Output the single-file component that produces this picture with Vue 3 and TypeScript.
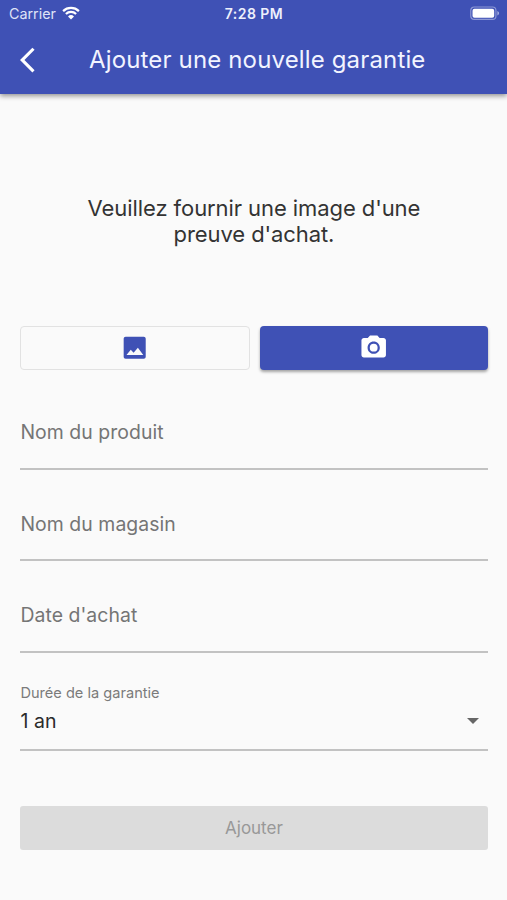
<script setup lang="ts">
import { ref } from 'vue'

interface Field {
  id: string
  label: string
}

const fields: Field[] = [
  { id: 'product', label: 'Nom du produit' },
  { id: 'shop', label: 'Nom du magasin' },
  { id: 'date', label: "Date d'achat" },
]
const duration = ref<string>('1 an')
</script>

<template>
  <div class="screen">
    <header class="header">
      <div class="status">
        <div class="carrier">
          <span class="carrier-name">Carrier</span>
          <svg class="wifi" viewBox="0 0 18 14" aria-hidden="true">
            <path d="M1.1 5.1a11.4 11.4 0 0 1 15.8 0" />
            <path d="M3.9 8a7.4 7.4 0 0 1 10.2 0" />
            <path class="wifi-dot" d="M9 13.4 6 10.5a4.3 4.3 0 0 1 6 0z" />
          </svg>
        </div>
        <span class="clock">7:28 PM</span>
        <svg class="battery" viewBox="0 0 31 15" aria-hidden="true">
          <rect class="battery-shell" x="0.8" y="0.8" width="26" height="12.8" rx="3.6" />
          <rect class="battery-fill" x="2.6" y="2.6" width="22.4" height="9.2" rx="2" />
          <path class="battery-tip" d="M28.3 5c2.3.9 2.3 3.6 0 4.5z" />
        </svg>
      </div>
      <div class="toolbar">
        <button class="back" type="button" aria-label="Retour">
          <svg viewBox="0 0 12 24"><path d="M11.67 3.87L9.9 2.1 0 12l9.9 9.9 1.77-1.77L3.54 12z" /></svg>
        </button>
        <h1 class="title">Ajouter une nouvelle garantie</h1>
      </div>
    </header>

    <main class="content">
      <p class="prompt">Veuillez fournir une image d'une<br />preuve d'achat.</p>

      <div class="sources">
        <button class="source outlined" type="button" aria-label="Galerie">
          <svg viewBox="0 0 24 24"><path d="M21 19.4V4.6c0-.9-.7-1.6-1.6-1.6H4.6C3.7 3 3 3.7 3 4.6v14.8c0 .9.7 1.6 1.6 1.6h14.8c.9 0 1.6-.7 1.6-1.6zM8.8 13.7l2.3 2.5 3.5-4.2 4.4 6H5.3l3.5-4.3z" /></svg>
        </button>
        <button class="source filled" type="button" aria-label="Appareil photo">
          <svg viewBox="0 0 24 24">
            <circle cx="12" cy="12" r="3.2" />
            <path d="M9 2L7.17 4H4c-1.1 0-2 .9-2 2v12c0 1.1.9 2 2 2h16c1.1 0 2-.9 2-2V6c0-1.1-.9-2-2-2h-3.17L15 2H9zm3 15c-2.76 0-5-2.24-5-5s2.24-5 5-5 5 2.24 5 5-2.24 5-5 5z" />
          </svg>
        </button>
      </div>

      <div class="fields">
        <div v-for="field in fields" :key="field.id" class="field">
          <span class="field-label">{{ field.label }}</span>
        </div>
      </div>

      <div class="select">
        <span class="select-label">Durée de la garantie</span>
        <div class="select-row">
          <span class="select-value">{{ duration }}</span>
          <svg class="caret" viewBox="0 0 12 6" aria-hidden="true"><path d="M0 0h12L6 6z" /></svg>
        </div>
      </div>

      <button class="submit" type="button" disabled>Ajouter</button>
    </main>
  </div>
</template>

<style>
body {
  margin: 0;
  background: #fafafa;
}
</style>

<style scoped>
.screen {
  height: 900px;
  overflow: hidden;
  background: #fafafa;
  font-family: Inter, "Liberation Sans", sans-serif;
}
button {
  font: inherit;
  margin: 0;
  padding: 0;
  border: 0;
  box-sizing: border-box;
}
.header {
  height: 94px;
  background: #3f51b5;
  color: #fff;
  box-shadow: 0 2px 5px rgba(0, 0, 0, 0.42);
}
.status {
  display: grid;
  grid-template-columns: 1fr auto 1fr;
  align-items: center;
  height: 26px;
  padding: 0 7px 0 9px;
  box-sizing: border-box;
}
.carrier {
  display: flex;
  align-items: center;
  gap: 6px;
  color: #dfe3f7;
}
.carrier-name {
  font-size: 14.3px;
  line-height: 18px;
  padding-top: 2px;
}
.wifi {
  width: 18px;
  height: 14px;
  fill: none;
  stroke: #fff;
  stroke-width: 2.2;
}
.wifi .wifi-dot {
  fill: #fff;
  stroke: none;
}
.clock {
  font-size: 14px;
  line-height: 18px;
  padding: 2px 1px 0 0;
  font-weight: 600;
  letter-spacing: 0.45px;
  color: #eef0fc;
}
.battery {
  justify-self: end;
  width: 30px;
  height: 15px;
}
.battery-shell {
  fill: none;
  stroke: #8d98d5;
  stroke-width: 1.2;
}
.battery-fill {
  fill: #fff;
}
.battery-tip {
  fill: #a5aedf;
}
.toolbar {
  display: flex;
  align-items: center;
  height: 67px;
  padding-left: 20px;
}
.back {
  display: flex;
  width: 69px;
  background: none;
}
.back svg {
  width: 15px;
  height: 30px;
  fill: #fff;
}
.title {
  margin: 0;
  padding-top: 1px;
  font-size: 24px;
  line-height: 30px;
  font-weight: 400;
  letter-spacing: 0.15px;
  white-space: nowrap;
  color: #f2f4ff;
}
.content {
  padding: 101px 19.5px 0 20.4px;
}
.prompt {
  margin: 0;
  text-align: center;
  font-size: 22px;
  line-height: 26px;
  letter-spacing: -0.08px;
  color: #333;
  white-space: nowrap;
}
.sources {
  display: flex;
  gap: 10px;
  margin-top: 79px;
}
.source {
  flex: 1;
  display: flex;
  align-items: center;
  justify-content: center;
  height: 44px;
  border-radius: 4px;
}
.source svg {
  width: 29.4px;
  height: 29.4px;
  margin-right: 1px;
}
.outlined {
  background: transparent;
  border: 1.5px solid #e2e2e2;
  fill: #3f51b5;
}
.filled {
  background: #3f51b5;
  fill: #fff;
  box-shadow: 0 2px 3px rgba(0, 0, 0, 0.35);
}
.field {
  height: 91.7px;
  padding-top: 41px;
  box-sizing: border-box;
  border-bottom: 2px solid #c2c2c2;
}
.fields {
  margin-top: 8px;
}
.field-label {
  display: block;
  font-size: 19.4px;
  line-height: 26px;
  letter-spacing: 0.07px;
  color: #757575;
}
.select {
  height: 97.5px;
  padding-top: 30px;
  box-sizing: border-box;
  border-bottom: 2px solid #c2c2c2;
}
.select-label {
  display: block;
  font-size: 14.6px;
  line-height: 20px;
  color: #7b7b7b;
}
.select-row {
  display: flex;
  align-items: center;
  justify-content: space-between;
  margin-top: 5px;
  padding-right: 9px;
}
.select-value {
  font-size: 19.5px;
  line-height: 26px;
  letter-spacing: 0.1px;
  color: #2b2b2b;
}
.caret {
  width: 12px;
  height: 6px;
  fill: #666;
}
.submit {
  display: block;
  width: 100%;
  height: 44px;
  margin-top: 55.4px;
  border-radius: 3px;
  background: #dcdcdc;
  color: #989898;
  font-size: 17px;
}
</style>
